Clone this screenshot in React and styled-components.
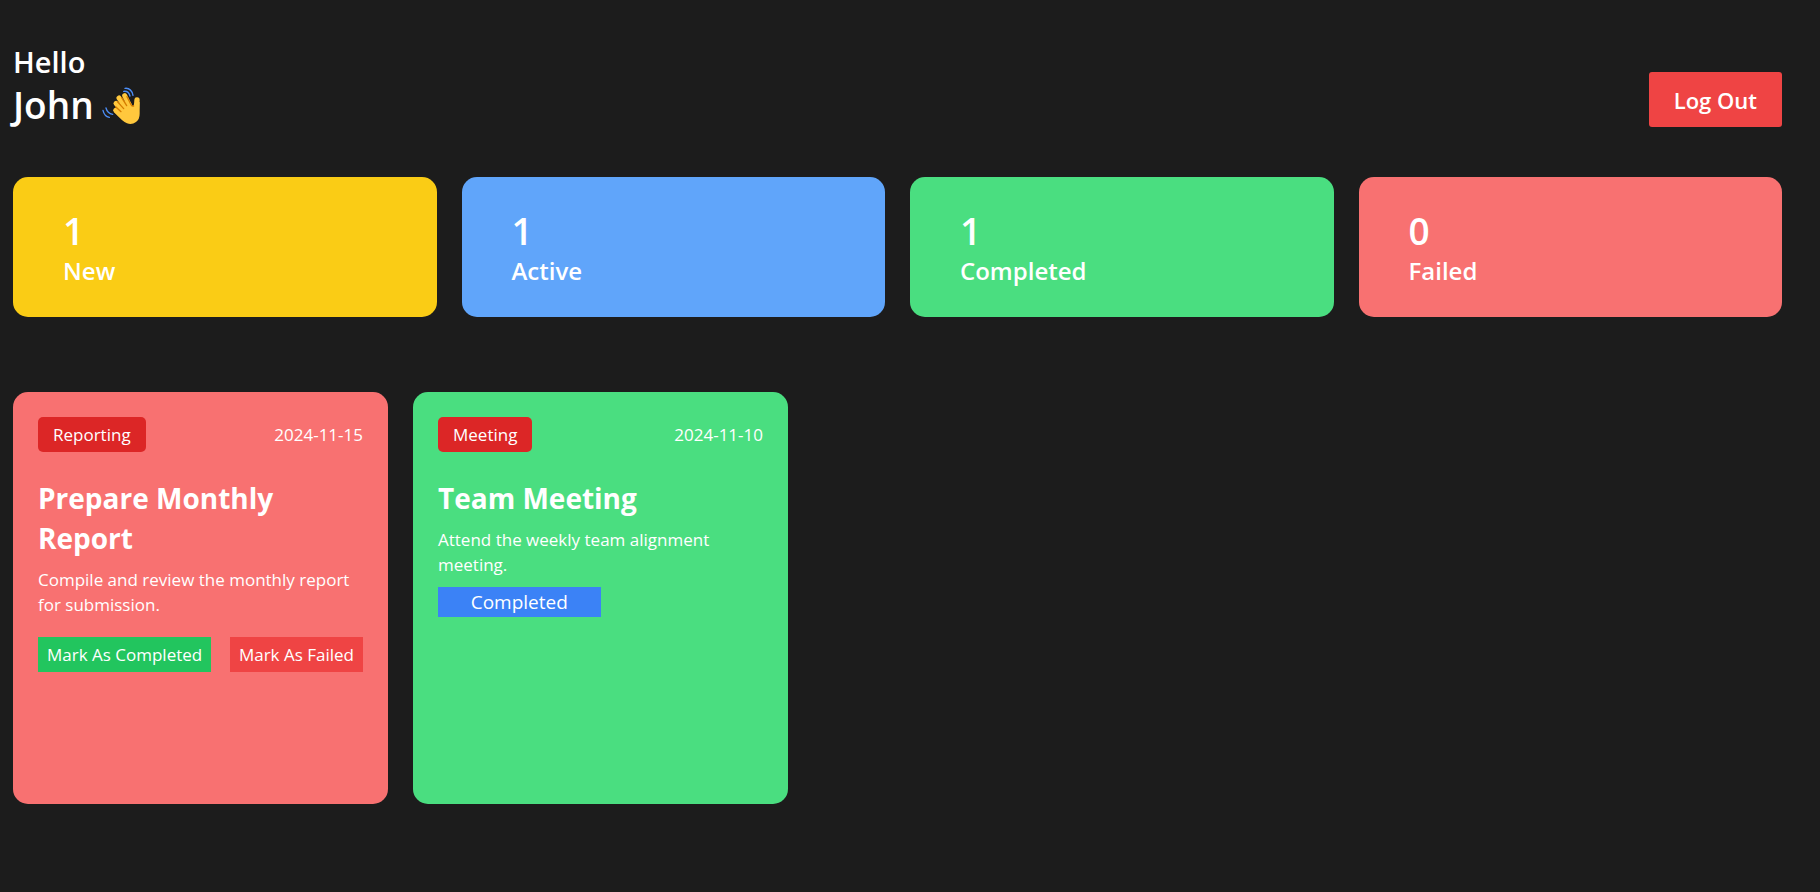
import React from "react";
import styled, { createGlobalStyle } from "styled-components";

const GlobalStyle = createGlobalStyle`
  *, *::before, *::after { box-sizing: border-box; }
  body {
    margin: 0;
    background: #1c1c1c;
    color: #fff;
    font-family: "Open Sans", "Noto Sans", sans-serif;
  }
  h1, h2, p { margin: 0; }
  button { border: 0; color: inherit; font: inherit; cursor: pointer; }
`;

const Page = styled.main`
  min-height: 100vh;
  padding: 42px 38px 38px 13px;
`;

const Header = styled.header`
  display: flex;
  align-items: flex-end;
  justify-content: space-between;
`;

const Greeting = styled.h1`
  font-size: 29px;
  line-height: 40px;
  font-weight: 600;
`;

const UserName = styled.span`
  display: flex;
  align-items: center;
  gap: 8px;
  font-size: 37px;
  line-height: 45px;
`;

const WaveIcon = styled.svg`
  width: 38px;
  height: 38px;
`;

const LogOut = styled.button`
  padding: 11px 25px 9px;
  border-radius: 3px;
  background: #ef4444;
  font-size: 22px;
  line-height: 35px;
  font-weight: 600;
`;

const Stats = styled.section`
  display: grid;
  grid-template-columns: repeat(4, 1fr);
  gap: 25px;
  margin-top: 50px;
`;

const Stat = styled.article`
  padding: 31px 50px 29px;
  border-radius: 15px;
  background: ${(p) => p.$color};
  font-weight: 600;
`;

const StatCount = styled.h2`
  font-size: 37px;
  line-height: 45px;
  font-weight: 600;
`;

const StatLabel = styled.p`
  font-size: 24px;
  line-height: 35px;
`;

const Tasks = styled.section`
  display: flex;
  gap: 25px;
  margin-top: 75px;
  overflow-x: auto;
`;

const Task = styled.article`
  flex: 0 0 375px;
  min-height: 412px;
  padding: 25px;
  border-radius: 15px;
  background: ${(p) => p.$color};
  font-size: 17px;
  line-height: 25px;
`;

const TaskTop = styled.div`
  display: flex;
  align-items: center;
  justify-content: space-between;
`;

const Tag = styled.span`
  padding: 5px 15px;
  border-radius: 5px;
  background: #dc2626;
`;

const TaskTitle = styled.h2`
  margin: 26px 0 9px;
  font-size: 28px;
  line-height: 40px;
  font-weight: 700;
`;

const Actions = styled.div`
  display: flex;
  justify-content: space-between;
  margin-top: 20px;
`;

const Action = styled.button`
  padding: 5px 9px;
  background: ${(p) => p.$color};
`;

const DoneButton = styled.button`
  width: 50%;
  margin-top: 10px;
  padding: 0;
  background: #3b82f6;
  && { font-size: 19px; line-height: 30px; }
`;

const stats = [
  { count: 1, label: "New", color: "#facc15" },
  { count: 1, label: "Active", color: "#60a5fa" },
  { count: 1, label: "Completed", color: "#4ade80" },
  { count: 0, label: "Failed", color: "#f87171" },
];

const tasks = [
  {
    tag: "Reporting",
    date: "2024-11-15",
    title: "Prepare Monthly Report",
    text: "Compile and review the monthly report for submission.",
    color: "#f87171",
    done: false,
  },
  {
    tag: "Meeting",
    date: "2024-11-10",
    title: "Team Meeting",
    text: "Attend the weekly team alignment meeting.",
    color: "#4ade80",
    done: true,
  },
];

function Wave() {
  return (
    <WaveIcon viewBox="14 18 114 114" role="img" aria-label="waving hand" fill="none" strokeLinecap="round" strokeLinejoin="round">
      <g stroke="#ffc83d" strokeWidth="15">
        <path d="M82 47 100 84M65 54 90 90M56 70 82 100M55 91 80 112" />
        <path d="M119 60 117 90" strokeWidth="16" />
      </g>
      <path fill="#ffc83d" d="M76 76 100 66 105 79Q109 79 111 70L127 66 127 101Q127 118 116 126Q104 135 89 130Q77 126 50 96Z" />
      <path stroke="#d67d00" strokeWidth="4" d="M73 53 88 77M60 65 79 86M55 80 71 95M89 50 100 72Q103 80 109 78" />
      <path stroke="#4c8df6" strokeWidth="4" d="M83 25Q102 23 107 46M79 34Q94 32 98 48M17 91Q21 109 36 112M26 84Q30 100 46 103" />
    </WaveIcon>
  );
}

export default function App() {
  return (
    <>
      <GlobalStyle />
      <Page>
        <Header>
          <Greeting>
            Hello
            <UserName>
              John <Wave />
            </UserName>
          </Greeting>
          <LogOut type="button">Log Out</LogOut>
        </Header>
        <Stats>
          {stats.map((s) => (
            <Stat key={s.label} $color={s.color}>
              <StatCount>{s.count}</StatCount>
              <StatLabel>{s.label}</StatLabel>
            </Stat>
          ))}
        </Stats>
        <Tasks>
          {tasks.map((t) => (
            <Task key={t.title} $color={t.color}>
              <TaskTop>
                <Tag>{t.tag}</Tag>
                <time dateTime={t.date}>{t.date}</time>
              </TaskTop>
              <TaskTitle>{t.title}</TaskTitle>
              <p>{t.text}</p>
              {t.done ? (
                <DoneButton type="button">Completed</DoneButton>
              ) : (
                <Actions>
                  <Action type="button" $color="#22c55e">Mark As Completed</Action>
                  <Action type="button" $color="#ef4444">Mark As Failed</Action>
                </Actions>
              )}
            </Task>
          ))}
        </Tasks>
      </Page>
    </>
  );
}
